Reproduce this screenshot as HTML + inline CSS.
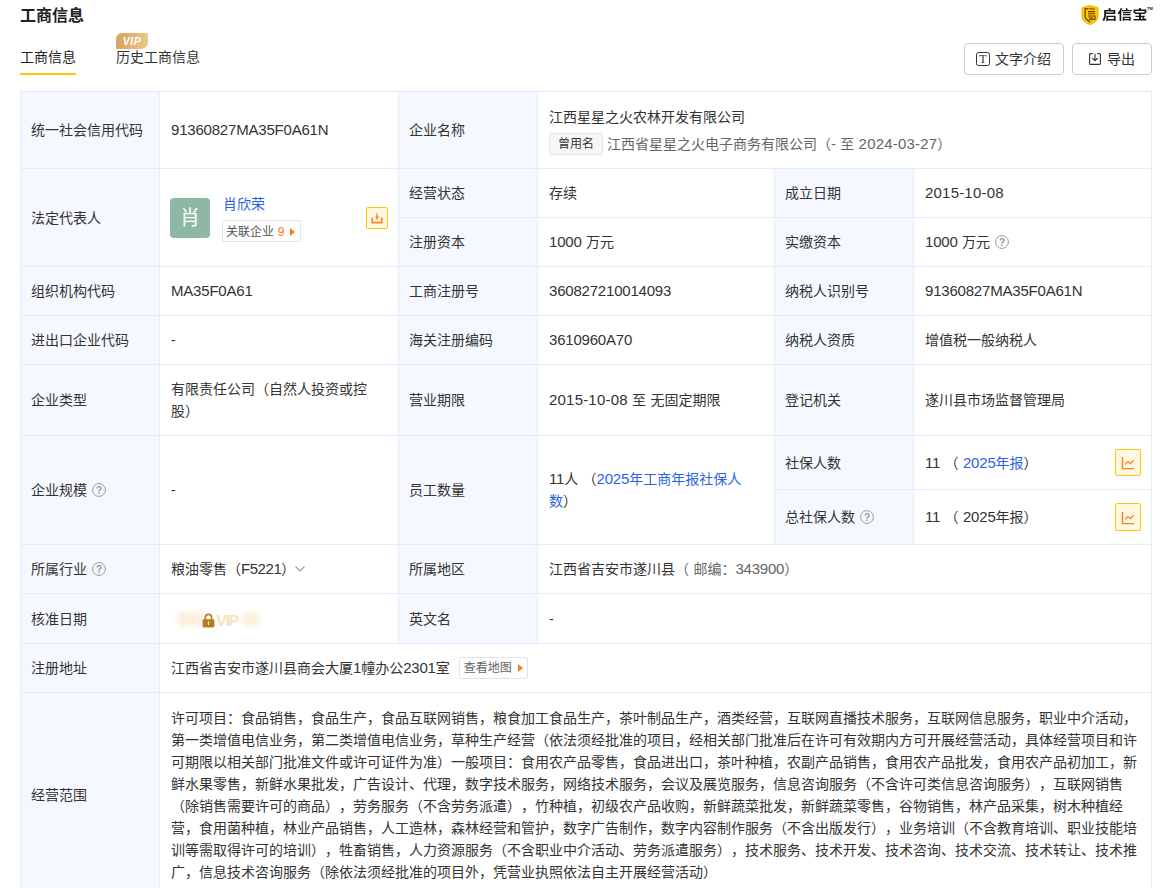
<!DOCTYPE html>
<html lang="zh-CN">
<head>
<meta charset="utf-8">
<title>工商信息</title>
<style>
*{box-sizing:border-box;margin:0;padding:0}
html,body{width:1170px;height:888px;overflow:hidden;background:#fff}
body{text-spacing-trim:space-all;font-family:"Liberation Sans","Noto Sans CJK SC",sans-serif;font-size:14px;color:#333;position:relative;line-height:22px}
.n{font-size:15px;letter-spacing:-.2px}
.d{font-size:15px;letter-spacing:.2px}
h2{position:absolute;left:20px;top:4px;font-size:16px;font-weight:bold;color:#222;line-height:24px}
.logo{position:absolute;left:1081px;top:4px;width:75px;height:22px}
.logo svg{position:absolute;left:0;top:1px}
.logo b{position:absolute;left:21px;top:0;font-size:15px;line-height:22px;font-weight:bold;color:#1a1a1a;letter-spacing:0;letter-spacing:.3px;transform:scaleY(.84);transform-origin:50% 56%}
.logo i{position:absolute;left:66px;top:2px;font-size:4px;line-height:5px;font-style:normal;font-weight:bold;color:#222}
.tabs{position:absolute;left:20px;top:46px;height:30px}
.tab{position:absolute;top:0;white-space:nowrap;line-height:22px;color:#333}
.tab.on{left:0;width:56px;height:29px;border-bottom:2px solid #ffc60a;color:#222}
.tab.t2{left:96px}
.vip{position:absolute;left:116px;top:33px;width:32px;height:16px;border-radius:6px 1px 7px 1px;background:linear-gradient(100deg,#d9a257,#ebc98d);color:#fff;font-size:10.5px;line-height:16px;font-weight:bold;font-style:italic;text-align:center;letter-spacing:.5px;padding-left:0}
.btn{position:absolute;top:43px;height:32px;border:1px solid #ccc;border-radius:4px;background:#fff;line-height:30px;white-space:nowrap;color:#333}
.b1{left:964px;width:100px}
.b2{left:1072px;width:80px}
.btn svg{position:absolute}
.btn span{position:absolute;top:0}
table{position:absolute;left:20px;top:91px;width:1132px;border-collapse:separate;border-spacing:0;table-layout:fixed;border-top:1px solid #e3ecfa;border-left:1px solid #e3ecfa}
td{border-right:1px solid #e3ecfa;border-bottom:1px solid #e3ecfa;padding:0 10px 0 11px;vertical-align:middle;line-height:22px;color:#333;word-break:break-all;word-spacing:.5px}
td.l{background:#f5f9ff;padding-left:10px}
a{color:#2a64e4;text-decoration:none}
.g{color:#666}
.q{vertical-align:-2px;margin-left:1px}
.tag{display:inline-block;height:22px;line-height:20px;border:1px solid #e5e5e5;border-radius:2px;background:#f6f6f6;font-size:12px;padding:0 8px;color:#333;margin-right:4px;vertical-align:top}
.av{position:absolute;left:10px;top:29px;width:40px;height:40px;border-radius:4px;background:#8fb8a4;color:#fff;font-size:20px;line-height:40px;text-align:center}
.rel{position:relative;height:97px}
.nm{position:absolute;left:63px;top:24px;line-height:22px}
.gl{position:absolute;left:62px;top:51px;height:22px;border:1px solid #e5e5e5;border-radius:2px;font-size:12px;line-height:22px;padding:0 0 0 3px;width:79px;white-space:nowrap;color:#555;background:#fff}
.gl em{font-style:normal;color:#ff7a1a;margin-right:1px}
.tri{display:inline-block;width:0;height:0;border-left:5px solid #ff7a1a;border-top:4px solid transparent;border-bottom:4px solid transparent;margin-left:4px;vertical-align:0}
.ib{position:absolute;width:22px;height:22px;border:1px solid #ffc60a;border-radius:2px;background:#fff8e1}
.ib2{width:26px;height:27px}
</style>
</head>
<body>
<h2>工商信息</h2>
<div class="logo">
<svg width="18" height="20" viewBox="0 0 18 20"><path d="M9 0.6 L17 2.8 V11 C17 15.3 13.4 18 9 19.5 C4.6 18 1 15.3 1 11 V2.8 Z" fill="#fcc800" stroke="#eeb100" stroke-width="1"/><path d="M7.6 3.6 H4.2 V12.4 C4.8 14.4 6.6 15.6 9.2 16.8" fill="none" stroke="#6b4200" stroke-width="1.3"/><path d="M8.6 4 H13.8 M10 2.8 V4 M7 6.6 H14 M7 8.8 H14 M7 11 H14 V14.4 H8.8 V12.8 H11.8" fill="none" stroke="#6b4200" stroke-width="1.1"/></svg>
<b>启信宝</b><i>TM</i>
</div>
<div class="tabs"><div class="tab on">工商信息</div><div class="tab t2">历史工商信息</div></div>
<div class="vip">VIP</div>
<div class="btn b1"><svg style="left:11px;top:8px" width="14" height="14" viewBox="0 0 14 14"><rect x=".5" y=".5" width="13" height="13" rx="2" fill="none" stroke="#333" stroke-width="1"/><text x="7" y="11" font-family="Liberation Serif,serif" font-size="12" text-anchor="middle" fill="#333">T</text></svg><span style="left:30px">文字介绍</span></div>
<div class="btn b2"><svg style="left:16px;top:9px" width="12" height="12" viewBox="0 0 12 12"><path d="M3.6 .6 H1.6 Q.6 .6 .6 1.6 V10.4 Q.6 11.4 1.6 11.4 H10.4 Q11.4 11.4 11.4 10.4 V1.6 Q11.4 .6 10.4 .6 H8.4" fill="none" stroke="#333" stroke-width="1.1"/><path d="M6 .8 V7.6 M3.2 5 L6 7.8 L8.8 5" fill="none" stroke="#333" stroke-width="1.1"/></svg><span style="left:34px">导出</span></div>

<table>
<colgroup><col style="width:139px"><col style="width:239px"><col style="width:139px"><col style="width:237px"><col style="width:139px"><col style="width:238px"></colgroup>
<tr style="height:77px"><td class="l">统一社会信用代码</td><td><span class="n">91360827MA35F0A61N</span></td><td class="l">企业名称</td><td colspan="3" style="padding-top:1px"><div style="line-height:22px">江西星星之火农林开发有限公司</div><div style="margin-top:5px;line-height:22px"><span class="tag">曾用名</span><span class="g">江西省星星之火电子商务有限公司（<span class="n">-</span> 至 <span class="d">2024-03-27</span>）</span></div></td></tr>
<tr style="height:49px"><td class="l" rowspan="2">法定代表人</td><td rowspan="2" style="padding:0"><div class="rel"><div class="av">肖</div><a class="nm">肖欣荣</a><div class="gl">关联企业 <em>9</em><span class="tri"></span></div><div class="ib" style="left:206px;top:38px"><svg width="20" height="20" viewBox="0 0 20 20"><path d="M5.2 9.5 V14.6 H14.8 V9.5" fill="none" stroke="#ff8420" stroke-width="1.6"/><path d="M10 5.5 V10.5" fill="none" stroke="#ff8420" stroke-width="1.4"/><path d="M7.8 8.6 H12.2 L10 11.4 Z" fill="#ff8420"/></svg></div></div></td><td class="l">经营状态</td><td>存续</td><td class="l">成立日期</td><td><span class="d">2015-10-08</span></td></tr>
<tr style="height:49px"><td class="l">注册资本</td><td><span class="n">1000</span> 万元</td><td class="l">实缴资本</td><td><span class="n">1000</span> 万元 <svg class="q" width="14" height="14" viewBox="0 0 14 14"><circle cx="7" cy="7" r="6.4" fill="none" stroke="#999" stroke-width="1"/><text x="7" y="10.6" font-family="Liberation Sans,sans-serif" font-size="10" font-weight="bold" text-anchor="middle" fill="#999">?</text></svg></td></tr>
<tr style="height:49px"><td class="l">组织机构代码</td><td><span class="n">MA35F0A61</span></td><td class="l">工商注册号</td><td><span class="n">360827210014093</span></td><td class="l">纳税人识别号</td><td><span class="n">91360827MA35F0A61N</span></td></tr>
<tr style="height:49px"><td class="l">进出口企业代码</td><td>-</td><td class="l">海关注册编码</td><td><span class="n">3610960A70</span></td><td class="l">纳税人资质</td><td>增值税一般纳税人</td></tr>
<tr style="height:71px"><td class="l">企业类型</td><td>有限责任公司（自然人投资或控股）</td><td class="l">营业期限</td><td><span class="d">2015-10-08</span> 至 无固定期限</td><td class="l">登记机关</td><td>遂川县市场监督管理局</td></tr>
<tr style="height:54px"><td class="l" rowspan="2">企业规模 <svg class="q" width="14" height="14" viewBox="0 0 14 14"><circle cx="7" cy="7" r="6.4" fill="none" stroke="#999" stroke-width="1"/><text x="7" y="10.6" font-family="Liberation Sans,sans-serif" font-size="10" font-weight="bold" text-anchor="middle" fill="#999">?</text></svg></td><td rowspan="2">-</td><td class="l" rowspan="2">员工数量</td><td rowspan="2"><span class="n">11</span>人 （<a><span class="n">2025</span>年工商年报社保人数</a>）</td><td class="l">社保人数</td><td style="position:relative"><span class="n">11</span> （ <a><span class="n">2025</span>年报</a>）<div class="ib ib2" style="left:201px;top:13px"><svg width="24" height="25" viewBox="0 0 24 25"><path d="M6.5 7 V18.6 H18" fill="none" stroke="#ff7d1f" stroke-width="1.4"/><path d="M9.2 14.4 L12 11.6 L14.4 13.6 L17.6 10.2" fill="none" stroke="#ff7d1f" stroke-width="1.3"/></svg></div></td></tr>
<tr style="height:55px"><td class="l">总社保人数 <svg class="q" width="14" height="14" viewBox="0 0 14 14"><circle cx="7" cy="7" r="6.4" fill="none" stroke="#999" stroke-width="1"/><text x="7" y="10.6" font-family="Liberation Sans,sans-serif" font-size="10" font-weight="bold" text-anchor="middle" fill="#999">?</text></svg></td><td style="position:relative"><span class="n">11</span> （ <span class="n">2025</span>年报）<div class="ib ib2" style="left:201px;top:13px;height:28px;padding-top:.5px"><svg width="24" height="25" viewBox="0 0 24 25"><path d="M6.5 7 V18.6 H18" fill="none" stroke="#ff7d1f" stroke-width="1.4"/><path d="M9.2 14.4 L12 11.6 L14.4 13.6 L17.6 10.2" fill="none" stroke="#ff7d1f" stroke-width="1.3"/></svg></div></td></tr>
<tr style="height:49px"><td class="l">所属行业 <svg class="q" width="14" height="14" viewBox="0 0 14 14"><circle cx="7" cy="7" r="6.4" fill="none" stroke="#999" stroke-width="1"/><text x="7" y="10.6" font-family="Liberation Sans,sans-serif" font-size="10" font-weight="bold" text-anchor="middle" fill="#999">?</text></svg></td><td>粮油零售（<span class="n" style="letter-spacing:-.45px">F5221</span>）<svg width="12" height="8" viewBox="0 0 12 8" style="margin-left:-1px;vertical-align:1px"><path d="M1.5 1.5 L6 6 L10.5 1.5" fill="none" stroke="#999" stroke-width="1.2"/></svg></td><td class="l">所属地区</td><td colspan="3">江西省吉安市遂川县<span class="g">（ 邮编：<span class="n">343900</span>）</span></td></tr>
<tr style="height:50px"><td class="l">核准日期</td><td style="position:relative"><div style="position:absolute;left:17px;top:18px;width:27px;height:14px;background:#fbe8cd;border-radius:5px;filter:blur(2.5px);opacity:.7"></div><div style="position:absolute;left:82px;top:18px;width:17px;height:14px;background:#fbe8cd;border-radius:5px;filter:blur(2.5px);opacity:.7"></div><svg style="position:absolute;left:42px;top:18.5px" width="13" height="15" viewBox="0 0 13 15"><path d="M3.4 7 V4.4 A3.1 3.1 0 0 1 9.6 4.4 V7" fill="none" stroke="#b57c22" stroke-width="1.7"/><rect x=".6" y="6.2" width="11.8" height="8.2" rx="1.4" fill="#b57c22"/><path d="M5.7 8.6 H7.3 L6.9 12 H6.1 Z" fill="#fbe8cd"/></svg><span style="position:absolute;left:56px;top:16px;font-size:16px;line-height:22px;font-weight:bold;font-style:italic;color:#f8e2bf;letter-spacing:-1.5px;transform:skewX(6deg)">VIP</span></td><td class="l">英文名</td><td colspan="3">-</td></tr>
<tr style="height:49px"><td class="l">注册地址</td><td colspan="5">江西省吉安市遂川县商会大厦<span class="n">1</span>幢办公<span class="n">2301</span>室<span class="tag" style="margin-left:9px;vertical-align:0;position:relative;top:-1px;padding:0 4px 0 4px;background:#fff;color:#666">查看地图<span class="tri" style="margin-left:6px"></span></span></td></tr>
<tr style="height:204px"><td class="l">经营范围</td><td colspan="5" style="padding-right:12px">许可项目：食品销售，食品生产，食品互联网销售，粮食加工食品生产，茶叶制品生产，酒类经营，互联网直播技术服务，互联网信息服务，职业中介活动，第一类增值电信业务，第二类增值电信业务，草种生产经营（依法须经批准的项目，经相关部门批准后在许可有效期内方可开展经营活动，具体经营项目和许可期限以相关部门批准文件或许可证件为准）一般项目：食用农产品零售，食品进出口，茶叶种植，农副产品销售，食用农产品批发，食用农产品初加工，新鲜水果零售，新鲜水果批发，广告设计、代理，数字技术服务，网络技术服务，会议及展览服务，信息咨询服务（不含许可类信息咨询服务），互联网销售（除销售需要许可的商品），劳务服务（不含劳务派遣），竹种植，初级农产品收购，新鲜蔬菜批发，新鲜蔬菜零售，谷物销售，林产品采集，树木种植经营，食用菌种植，林业产品销售，人工造林，森林经营和管护，数字广告制作，数字内容制作服务（不含出版发行），业务培训（不含教育培训、职业技能培训等需取得许可的培训），牲畜销售，人力资源服务（不含职业中介活动、劳务派遣服务），技术服务、技术开发、技术咨询、技术交流、技术转让、技术推广，信息技术咨询服务（除依法须经批准的项目外，凭营业执照依法自主开展经营活动）</td></tr>
</table>
</body>
</html>
